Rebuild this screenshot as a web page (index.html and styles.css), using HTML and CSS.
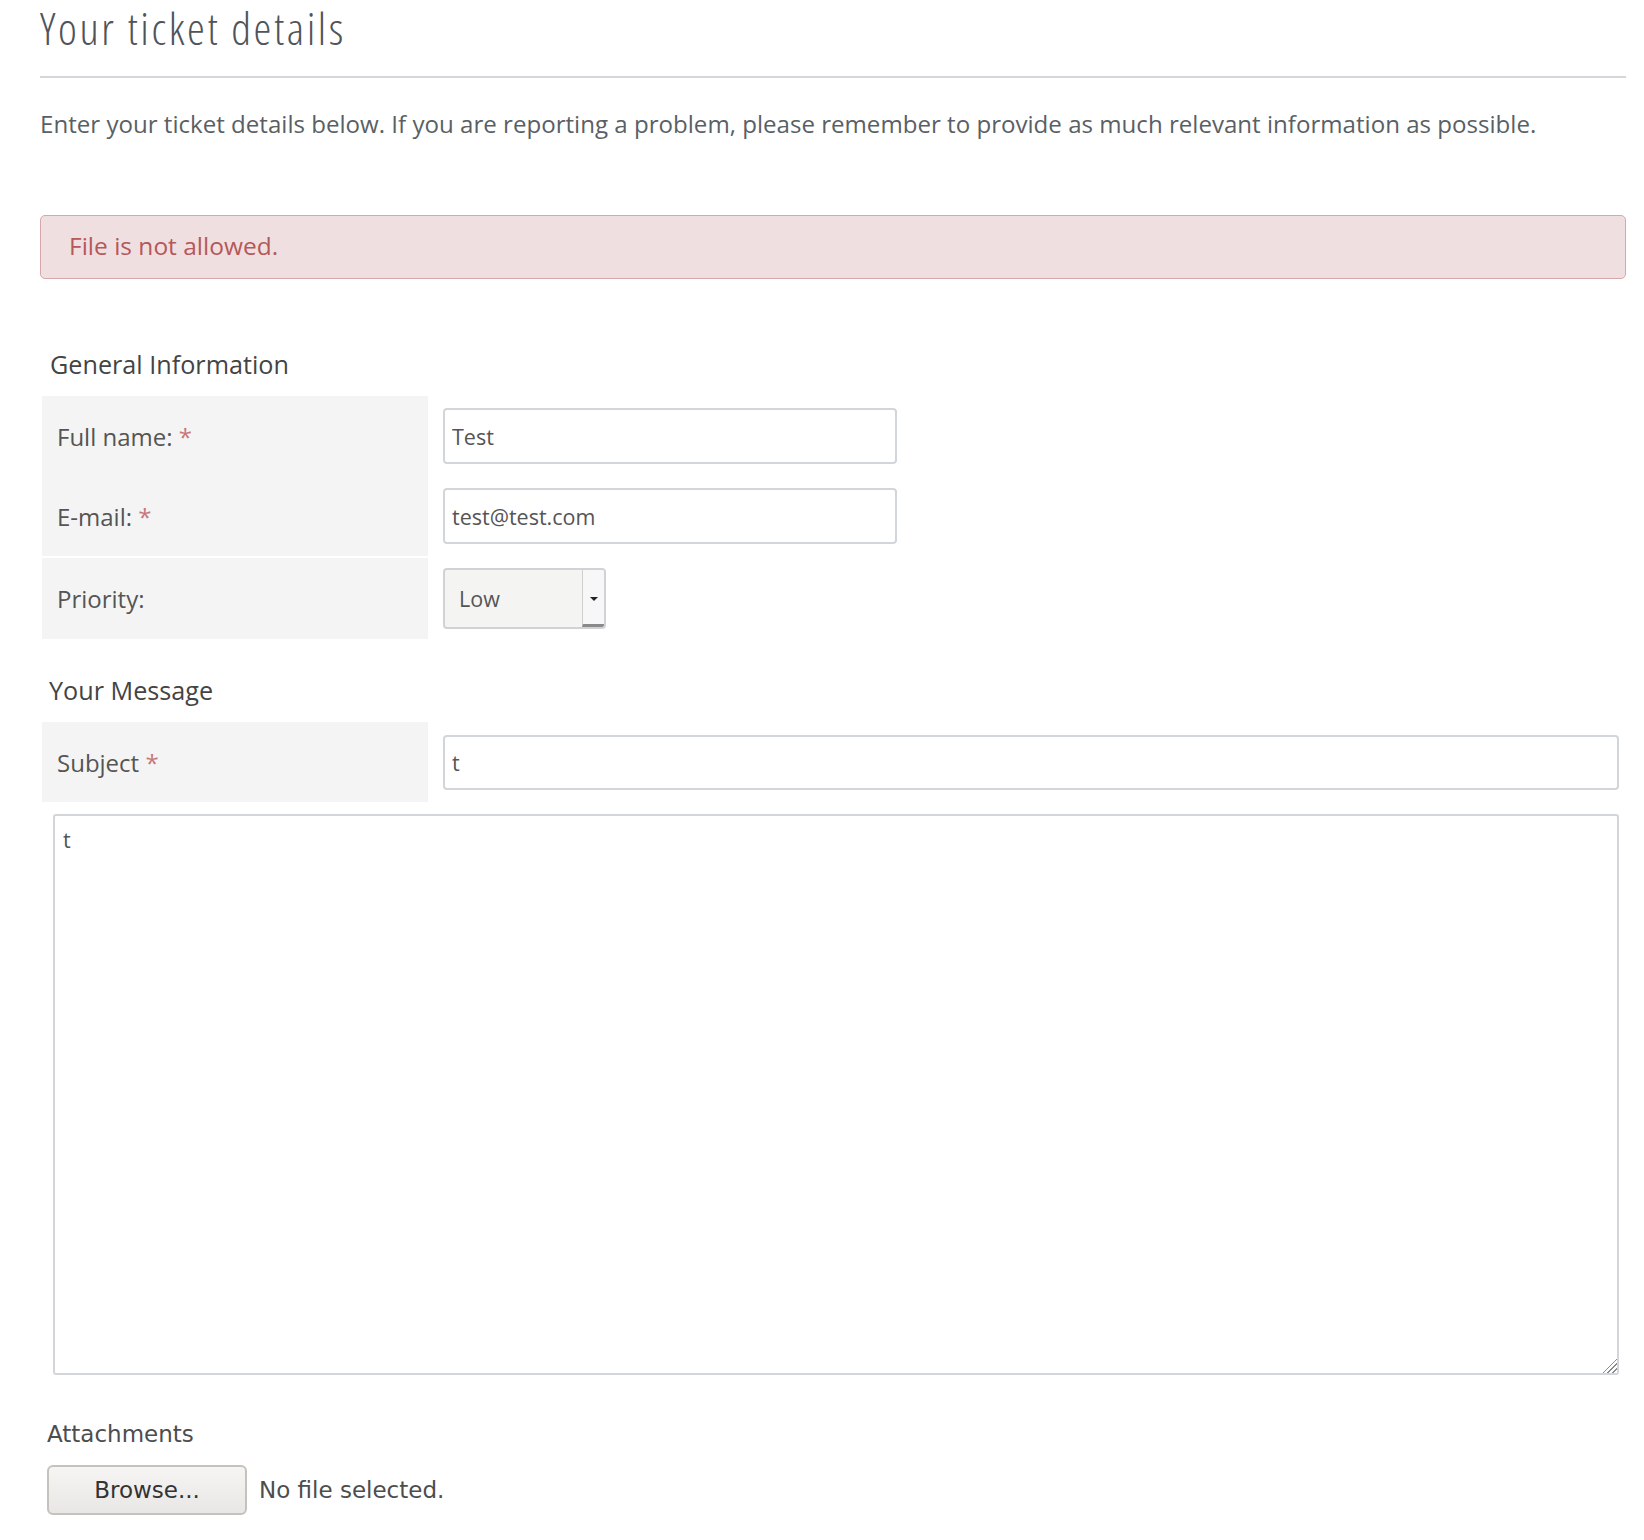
FILE: index.html
```html
<!DOCTYPE html>
<html lang="en">
<head>
<meta charset="utf-8">
<title>Your ticket details</title>
<link rel="stylesheet" href="styles.css">
</head>
<body>
<div class="page">
  <h1 class="title">Your ticket details</h1>
  <hr class="rule">
  <p class="intro">Enter your ticket details below. If you are reporting a problem, please remember to provide as much relevant information as possible.</p>
  <div class="alert">File is not allowed.</div>

  <form class="ticket-form">
    <h2 class="legend legend-general">General Information</h2>
    <div class="row">
      <div class="label-cell">Full name: <span class="req">*</span></div>
      <div class="field-cell"><input class="text-input short" type="text" value="Test"></div>
    </div>
    <div class="row">
      <div class="label-cell">E-mail: <span class="req">*</span></div>
      <div class="field-cell"><input class="text-input short" type="text" value="test@test.com"></div>
    </div>
    <div class="row row-sep">
      <div class="label-cell">Priority:</div>
      <div class="field-cell">
        <div class="select-box">
          <select class="select">
            <option>Low</option>
            <option>Medium</option>
            <option>High</option>
          </select>
          <span class="select-btn"><span class="caret"></span></span>
        </div>
      </div>
    </div>

    <h2 class="legend legend-message">Your Message</h2>
    <div class="row">
      <div class="label-cell">Subject <span class="req">*</span></div>
      <div class="field-cell wide"><input class="text-input full" type="text" value="t"></div>
    </div>
    <textarea class="message">t</textarea>

    <h2 class="attach-title">Attachments</h2>
    <div class="attach-row">
      <button type="button" class="browse">Browse...</button>
      <span class="no-file">No file selected.</span>
    </div>
  </form>
</div>
</body>
</html>
```
FILE: styles.css
```css
html, body {
  margin: 0;
  padding: 0;
  background: #ffffff;
}

.page {
  padding: 2px 18px 20px 40px;
  font-family: "Open Sans", "Liberation Sans", sans-serif;
  color: #555555;
}

.title {
  margin: 0;
  font-size: 45px;
  line-height: 52px;
  font-weight: 300;
  font-stretch: 75%;
  letter-spacing: 2.6px;
  color: #4f545a;
}

.rule {
  margin: 22px 0 0 0;
  border: 0;
  border-top: 2px solid #d3d7db;
  height: 0;
}

.intro {
  margin: 30px 0 0 0;
  font-size: 24.1px;
  line-height: 32px;
  color: #5a5f66;
}

.alert {
  margin-top: 75px;
  padding: 14px 28px 16px 28px;
  font-size: 24.5px;
  line-height: 32px;
  color: #b5585a;
  background: #efdfe0;
  border: 1px solid #d8a8a9;
  border-radius: 5px;
}

.ticket-form {
  margin: 0 7px 0 2px;
}

.legend {
  margin: 0;
  font-size: 25.2px;
  line-height: 32px;
  font-weight: 400;
  color: #444444;
}

.legend-general {
  margin-top: 69px;
  margin-bottom: 16px;
  padding-left: 8px;
}

.legend-message {
  margin-top: 35px;
  margin-bottom: 16px;
  padding-left: 7px;
}

.row {
  display: flex;
  height: 80px;
}

.row-sep {
  margin-top: 2px;
  height: 81px;
}

.label-cell {
  width: 386px;
  flex: none;
  box-sizing: border-box;
  padding-left: 15px;
  display: flex;
  align-items: center;
  background: #f4f4f4;
  font-size: 24px;
  color: #555555;
  white-space: pre;
}

.req {
  color: #c7777a;
}

.field-cell {
  display: flex;
  align-items: center;
  padding-left: 15px;
}

.field-cell.wide {
  flex: 1;
}

.text-input {
  box-sizing: border-box;
  height: 56px;
  margin: 0;
  padding: 0 7px;
  border: 2px solid #d2d5d9;
  border-radius: 4px;
  background: #ffffff;
  font-family: inherit;
  font-size: 21.5px;
  color: #555555;
  outline: none;
}

.text-input.short {
  width: 454px;
}

.text-input.full {
  width: 100%;
  height: 55px;
}

.select-box {
  display: flex;
  box-sizing: border-box;
  width: 163px;
  height: 61px;
  border: 2px solid #d0d3d6;
  border-radius: 4px;
  background: #f4f4f3;
  overflow: hidden;
}

.select {
  flex: 1;
  min-width: 0;
  appearance: none;
  -webkit-appearance: none;
  border: 0;
  background: transparent;
  margin: 0;
  padding: 0 0 0 14px;
  font-family: inherit;
  font-size: 21.5px;
  color: #555555;
  outline: none;
}

.select-btn {
  width: 22px;
  flex: none;
  display: flex;
  align-items: center;
  justify-content: center;
  background: #f7f7f7;
  border-left: 1px solid #cfcfcf;
  border-bottom: 3px solid #8a8a8a;
  box-sizing: border-box;
}

.caret {
  width: 0;
  height: 0;
  border-left: 4px solid transparent;
  border-right: 4px solid transparent;
  border-top: 4px solid #222222;
  margin-top: 3px;
}

.message {
  display: block;
  box-sizing: border-box;
  width: calc(100% - 11px);
  height: 561px;
  margin: 12px 0 0 11px;
  padding: 8px 8px;
  border: 2px solid #d2d5d9;
  border-radius: 3px;
  font-family: inherit;
  font-size: 21.5px;
  line-height: 32px;
  color: #555555;
  outline: none;
}

.message::-webkit-scrollbar {
  width: 18px;
  height: 18px;
}

.message::-webkit-resizer {
  background:
    linear-gradient(to bottom right, #ffffff 50%, transparent 50%),
    repeating-linear-gradient(135deg, #8c8c8c 0 1.5px, #ffffff 1.5px 3.5px);
}

.attach-title {
  margin: 45px 0 0 5px;
  font-family: "DejaVu Sans", sans-serif;
  font-size: 23px;
  line-height: 28px;
  font-weight: 400;
  color: #4d4d4d;
}

.attach-row {
  display: flex;
  align-items: center;
  margin: 17px 0 0 5px;
  font-family: "DejaVu Sans", sans-serif;
  font-size: 23px;
}

.browse {
  box-sizing: border-box;
  width: 200px;
  height: 50px;
  margin: 0;
  padding: 0;
  border: 2px solid #c5c1bd;
  border-radius: 6px;
  background: linear-gradient(#f6f5f4, #e9e7e5);
  font-family: "DejaVu Sans", sans-serif;
  font-size: 23px;
  color: #333333;
}

.no-file {
  margin-left: 12px;
  color: #4d4d4d;
}
```
